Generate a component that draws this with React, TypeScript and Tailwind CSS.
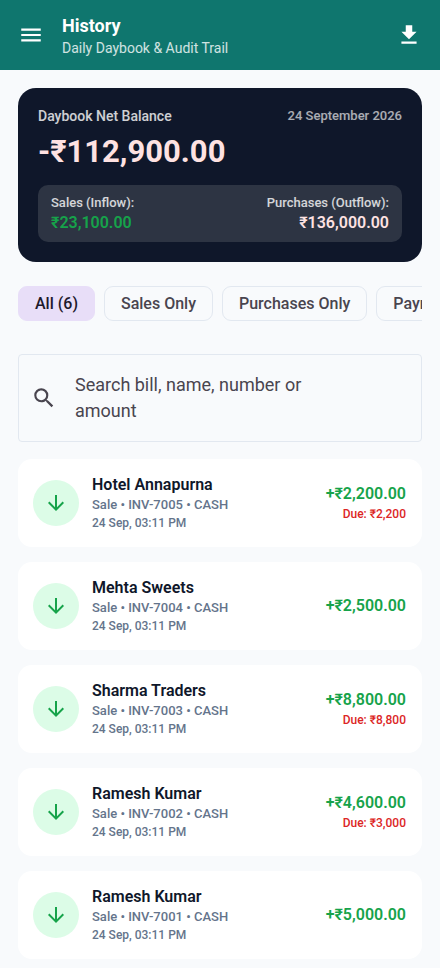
import { useState } from "react";
import { MdArrowDownward, MdDownload, MdMenu, MdSearch } from "react-icons/md";

type Entry = {
  name: string;
  invoice: string;
  amount: string;
  due?: string;
};

const entries: Entry[] = [
  { name: "Hotel Annapurna", invoice: "INV-7005", amount: "+₹2,200.00", due: "₹2,200" },
  { name: "Mehta Sweets", invoice: "INV-7004", amount: "+₹2,500.00" },
  { name: "Sharma Traders", invoice: "INV-7003", amount: "+₹8,800.00", due: "₹8,800" },
  { name: "Ramesh Kumar", invoice: "INV-7002", amount: "+₹4,600.00", due: "₹3,000" },
  { name: "Ramesh Kumar", invoice: "INV-7001", amount: "+₹5,000.00" },
];

const filters = ["All (6)", "Sales Only", "Purchases Only", "Payments"];

function Header() {
  return (
    <header className="flex h-[70px] items-center bg-[#0f766e] px-[18px] text-white">
      <button type="button" aria-label="Open menu">
        <MdMenu size={26} />
      </button>
      <div className="ml-[18px] flex-1 pt-[2px]">
        <h1 className="text-[18px] leading-6 font-bold">History</h1>
        <p className="text-[14px] leading-5 text-white/80">Daily Daybook &amp; Audit Trail</p>
      </div>
      <button type="button" aria-label="Download daybook">
        <MdDownload size={26} />
      </button>
    </header>
  );
}

function BalanceCard() {
  return (
    <section className="rounded-[18px] bg-[#0f172a] p-5 font-medium">
      <div className="flex items-center justify-between leading-4">
        <h2 className="text-[14px] text-white/80">Daybook Net Balance</h2>
        <p className="text-[13px] text-white/65">24 September 2026</p>
      </div>
      <p className="mt-2 text-[31px] leading-10 font-bold text-[#fee2e2]">-₹112,900.00</p>
      <dl className="mt-[13px] flex justify-between rounded-[10px] bg-[#2d3443] px-[13px] pt-2 pb-[9px]">
        <div>
          <dt className="text-[13px] leading-5 text-white/80">Sales (Inflow):</dt>
          <dd className="text-[16px] leading-5 font-semibold text-[#16a34a]">₹23,100.00</dd>
        </div>
        <div className="text-right">
          <dt className="text-[13px] leading-5 text-white/80">Purchases (Outflow):</dt>
          <dd className="text-[16px] leading-5 font-semibold text-[#fee2e2]">₹136,000.00</dd>
        </div>
      </dl>
    </section>
  );
}

function EntryCard({ entry }: { entry: Entry }) {
  return (
    <li className="flex h-[88px] items-center rounded-[14px] bg-white pl-[15px] pr-4">
      <span className="flex size-[46px] shrink-0 items-center justify-center rounded-full bg-[#dcfce7] text-[#16a34a]">
        <MdArrowDownward size={24} />
      </span>
      <div className="ml-[13px] min-w-0 flex-1 font-medium text-[#64748b]">
        <h3 className="text-[16px] leading-[22px] font-semibold text-[#0f172a]">{entry.name}</h3>
        <p className="text-[13px] leading-[18px]">Sale • {entry.invoice} • CASH</p>
        <p className="text-[12px] leading-[18px]">24 Sep, 03:11 PM</p>
      </div>
      <div className="text-right">
        <p className="text-[16px] leading-[22px] font-semibold text-[#16a34a]">{entry.amount}</p>
        {entry.due && (
          <p className="text-[12px] leading-[18px] font-medium text-[#dc2626]">Due: {entry.due}</p>
        )}
      </div>
    </li>
  );
}

export default function App() {
  const [active, setActive] = useState(filters[0]);

  return (
    <div className="min-h-screen bg-[#f8fafc] font-[Roboto,'Noto_Sans',sans-serif]">
      <Header />
      <main className="px-[18px] pt-[18px] pb-2">
        <BalanceCard />
        <div className="mt-6 flex gap-[9px] overflow-x-auto [scrollbar-width:none]">
          {filters.map((filter) => (
            <button
              key={filter}
              type="button"
              aria-pressed={active === filter}
              onClick={() => setActive(filter)}
              className={
                active === filter
                  ? "h-[35px] shrink-0 rounded-[9px] border border-[#e8def8] bg-[#e8def8] px-4 text-[16px] font-medium text-[#1d192b]"
                  : "h-[35px] shrink-0 rounded-[9px] border border-[#e2e8f0] px-4 text-[16px] font-medium text-[#49454f]"
              }
            >
              {filter}
            </button>
          ))}
        </div>
        <label className="mt-[33px] flex h-[88px] items-center rounded-[4px] border border-[#e2e8f0] pl-3 pr-4 text-[#49454f]">
          <MdSearch size={26} className="shrink-0" />
          <textarea
            aria-label="Search entries"
            rows={2}
            placeholder="Search bill, name, number or amount"
            className="ml-[18px] block flex-1 resize-none overflow-hidden bg-transparent pr-20 text-[18px] leading-[26px] outline-none placeholder:text-[#49454f]"
          />
        </label>
        <ul className="mt-[17px] flex flex-col gap-[15px]">
          {entries.map((entry) => (
            <EntryCard key={entry.invoice} entry={entry} />
          ))}
        </ul>
      </main>
    </div>
  );
}
